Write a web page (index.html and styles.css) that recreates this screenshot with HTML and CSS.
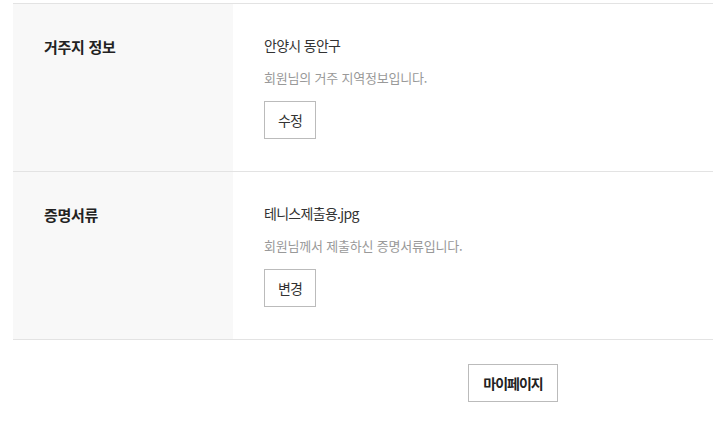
FILE: index.html
```html
<!DOCTYPE html>
<html lang="ko">
<head>
<meta charset="utf-8">
<link rel="stylesheet" href="styles.css">
</head>
<body>
<div class="wrap">
  <div class="table">
    <div class="row">
      <div class="th">거주지 정보</div>
      <div class="td">
        <p class="value">안양시 동안구</p>
        <p class="desc">회원님의 거주 지역정보입니다.</p>
        <button class="btn" type="button">수정</button>
      </div>
    </div>
    <div class="row">
      <div class="th">증명서류</div>
      <div class="td">
        <p class="value">테니스제출용.jpg</p>
        <p class="desc">회원님께서 제출하신 증명서류입니다.</p>
        <button class="btn" type="button">변경</button>
      </div>
    </div>
  </div>
  <div class="footer">
    <button class="btn btn-main" type="button">마이페이지</button>
  </div>
</div>
</body>
</html>
```
FILE: styles.css
```css
* { box-sizing: border-box; }
html, body { margin: 0; padding: 0; background: #fff; }
body {
  font-family: "Noto Sans CJK KR", "Noto Sans", sans-serif;
  color: #333;
  padding-top: 3px;
}
.wrap { margin-left: 13px; }
.table { border-top: 1px solid #e3e3e3; }
.row {
  display: grid;
  grid-template-columns: 220px 1fr;
  border-bottom: 1px solid #e3e3e3;
}
.th {
  background: #f8f8f8;
  padding: 32px 0 0 31px;
  font-size: 15px;
  line-height: 22px;
  font-weight: 700;
  color: #222;
  letter-spacing: -0.3px;
}
.td {
  padding: 31px 0 32px 31px;
}
.value {
  margin: 0;
  font-size: 14px;
  line-height: 20px;
  color: #333;
  letter-spacing: -0.7px;
}
.desc {
  margin: 15px 0 0;
  font-size: 13px;
  line-height: 16px;
  color: #999;
  letter-spacing: -0.2px;
}
.btn {
  display: block;
  margin-top: 15px;
  width: 52px;
  height: 38px;
  padding: 0;
  border: 1px solid #bbb;
  background: #fff;
  font-family: inherit;
  font-size: 14px;
  color: #333;
  letter-spacing: -1px;
}
.footer {
  padding: 24px 0 0 455px;
}
.btn-main {
  margin: 0;
  width: 90px;
  font-weight: 700;
  font-size: 14px;
  color: #222;
  letter-spacing: -1px;
}
```
